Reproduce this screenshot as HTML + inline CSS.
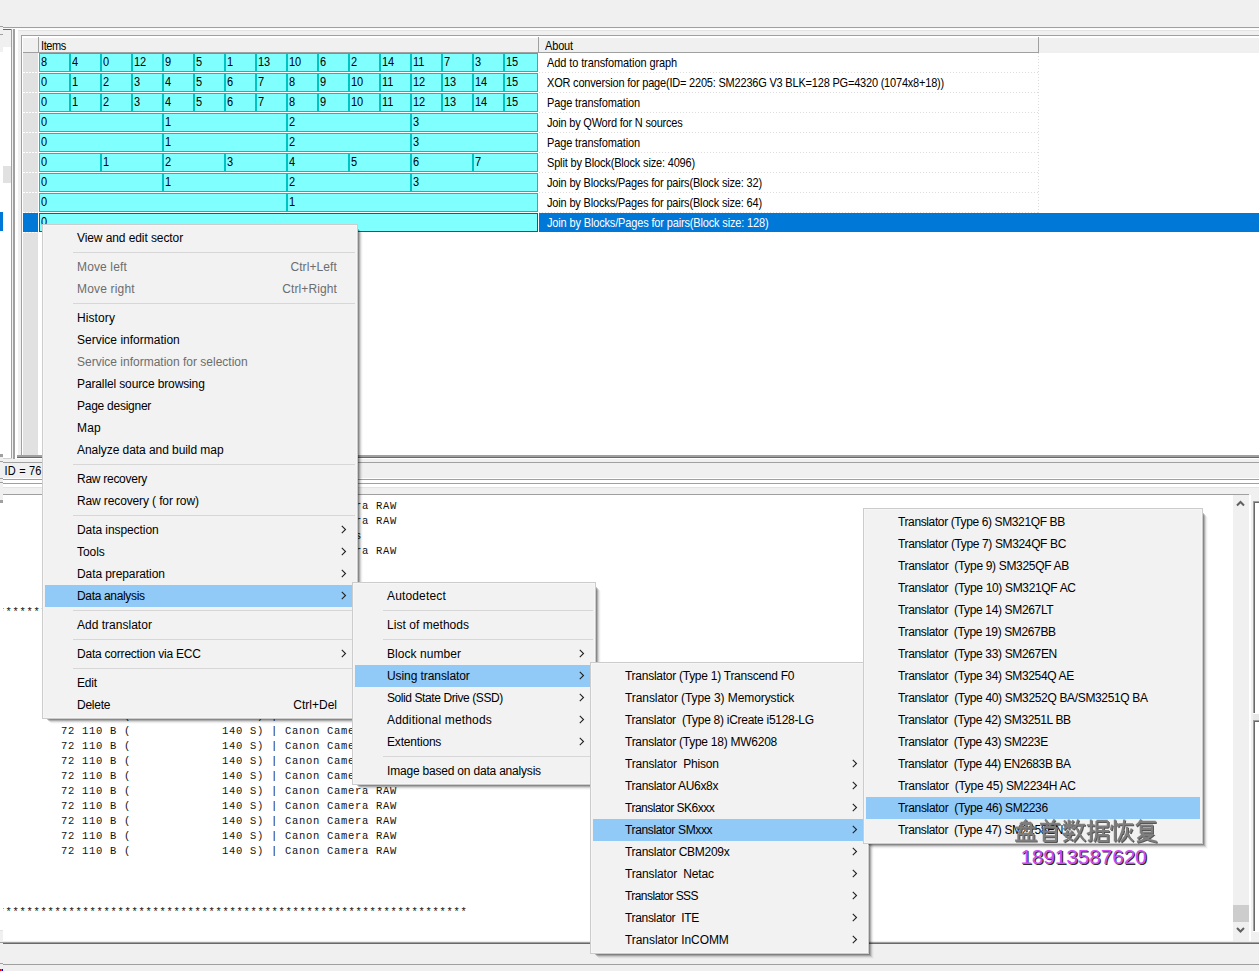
<!DOCTYPE html>
<html><head><meta charset="utf-8"><title>UI</title><style>
html,body{margin:0;padding:0}
body{width:1259px;height:971px;overflow:hidden;position:relative;background:#f0f0f0;font-family:"Liberation Sans",sans-serif}
#r{position:absolute;left:0;top:0;width:1259px;height:971px;overflow:hidden}
#r>div,#r>span,#r>svg{position:absolute;display:block}
.t{white-space:pre;line-height:14px}
.m{position:absolute;display:block;white-space:pre;font-family:"Liberation Mono",monospace;font-size:10.5px;line-height:16px;color:#111;letter-spacing:0.7px}
.menu{background:#f2f2f2;box-sizing:border-box;border:1px solid #cccccc;
 box-shadow:inset 0 0 0 1px #f6f6f6,3px 3px 0 -2px rgba(0,0,0,.214),4px 4px 0 -2px rgba(0,0,0,.176),5px 5px 0 -2px rgba(0,0,0,.105),6px 6px 0 -2px rgba(0,0,0,.05),7px 7px 0 -2px rgba(0,0,0,.02)}
</style></head><body><div id="r">
<div style="left:0px;top:0px;width:1259px;height:971px;background:#f0f0f0;"></div>
<div style="left:3px;top:27px;width:1256px;height:1px;background:#a0a0a0;"></div>
<div style="left:3px;top:28px;width:1256px;height:1px;background:#fafafa;"></div>
<div style="left:0px;top:26px;width:3px;height:1px;background:#a0a0a0;"></div>
<div style="left:0px;top:34px;width:3px;height:1px;background:#a0a0a0;"></div>
<div style="left:3px;top:29px;width:9px;height:1px;background:#696969;"></div>
<div style="left:11px;top:29px;width:1px;height:430px;background:#a0a0a0;"></div>
<div style="left:3px;top:47px;width:8px;height:411px;background:#ffffff;"></div>
<div style="left:0px;top:52px;width:3px;height:402px;background:#ffffff;"></div>
<div style="left:3px;top:458px;width:9px;height:1px;background:#d0d0d0;"></div>
<div style="left:0px;top:454px;width:3px;height:3px;background:#a0a0a0;"></div>
<div style="left:3px;top:166px;width:8px;height:17px;background:#e1e1e1;"></div>
<div style="left:0px;top:212px;width:3px;height:19px;background:#0078d7;"></div>
<div style="left:13px;top:29px;width:2px;height:431px;background:#a0a0a0;"></div>
<div style="left:15px;top:29px;width:2px;height:431px;background:#ffffff;"></div>
<div style="left:17px;top:29px;width:1px;height:426px;background:#ffffff;"></div>
<div style="left:18px;top:29px;width:1241px;height:1px;background:#ffffff;"></div>
<div style="left:18px;top:30px;width:1241px;height:1px;background:#e3e3e3;"></div>
<div style="left:18px;top:31px;width:1241px;height:4px;background:#f0f0f0;"></div>
<div style="left:21px;top:35px;width:1238px;height:1px;background:#a0a0a0;"></div>
<div style="left:21px;top:35px;width:1px;height:421px;background:#a0a0a0;"></div>
<div style="left:22px;top:36px;width:1237px;height:419px;background:#ffffff;"></div>
<div style="left:23px;top:38px;width:1236px;height:14px;background:#f0f0f0;"></div>
<div style="left:23px;top:52px;width:1016px;height:1px;background:#a0a0a0;"></div>
<div style="left:38px;top:37px;width:1px;height:16px;background:#a0a0a0;"></div>
<div style="left:538px;top:37px;width:1px;height:16px;background:#a0a0a0;"></div>
<div style="left:1038px;top:37px;width:1px;height:16px;background:#a0a0a0;"></div>
<div style="left:1039px;top:52px;width:220px;height:1px;background:#f0f0f0;"></div>
<span class="t" style="left:41px;top:39px;font-size:11px;font-weight:400;font-family:'Liberation Sans', sans-serif;color:#000;letter-spacing:-0.381px;transform:scaleY(1.10);transform-origin:0 10.8px">Items</span>
<span class="t" style="left:545px;top:39px;font-size:11px;font-weight:400;font-family:'Liberation Sans', sans-serif;color:#000;letter-spacing:-0.15px;transform:scaleY(1.10);transform-origin:0 10.8px">About</span>
<div style="left:23px;top:53px;width:15px;height:402px;background:#e1e1e1;"></div>
<div style="left:1038px;top:53px;width:1px;height:180px;background:repeating-linear-gradient(to bottom,#dcdcdc 0 1px,#fff 1px 3px)"></div>
<div style="left:538px;top:53px;width:1px;height:180px;background:#fff"></div>
<div style="left:39px;top:53px;width:31px;height:19px;background:#80ffff;border:1px solid #00c4c4;box-sizing:border-box"></div>
<span class="t" style="left:41px;top:55px;font-size:11px;font-weight:400;font-family:'Liberation Sans', sans-serif;color:#000;letter-spacing:0px;transform:scaleY(1.10);transform-origin:0 10.8px">8</span>
<div style="left:70px;top:53px;width:31px;height:19px;background:#80ffff;border:1px solid #00c4c4;box-sizing:border-box"></div>
<span class="t" style="left:72px;top:55px;font-size:11px;font-weight:400;font-family:'Liberation Sans', sans-serif;color:#000;letter-spacing:0px;transform:scaleY(1.10);transform-origin:0 10.8px">4</span>
<div style="left:101px;top:53px;width:31px;height:19px;background:#80ffff;border:1px solid #00c4c4;box-sizing:border-box"></div>
<span class="t" style="left:103px;top:55px;font-size:11px;font-weight:400;font-family:'Liberation Sans', sans-serif;color:#000;letter-spacing:0px;transform:scaleY(1.10);transform-origin:0 10.8px">0</span>
<div style="left:132px;top:53px;width:31px;height:19px;background:#80ffff;border:1px solid #00c4c4;box-sizing:border-box"></div>
<span class="t" style="left:134px;top:55px;font-size:11px;font-weight:400;font-family:'Liberation Sans', sans-serif;color:#000;letter-spacing:0px;transform:scaleY(1.10);transform-origin:0 10.8px">12</span>
<div style="left:163px;top:53px;width:31px;height:19px;background:#80ffff;border:1px solid #00c4c4;box-sizing:border-box"></div>
<span class="t" style="left:165px;top:55px;font-size:11px;font-weight:400;font-family:'Liberation Sans', sans-serif;color:#000;letter-spacing:0px;transform:scaleY(1.10);transform-origin:0 10.8px">9</span>
<div style="left:194px;top:53px;width:31px;height:19px;background:#80ffff;border:1px solid #00c4c4;box-sizing:border-box"></div>
<span class="t" style="left:196px;top:55px;font-size:11px;font-weight:400;font-family:'Liberation Sans', sans-serif;color:#000;letter-spacing:0px;transform:scaleY(1.10);transform-origin:0 10.8px">5</span>
<div style="left:225px;top:53px;width:31px;height:19px;background:#80ffff;border:1px solid #00c4c4;box-sizing:border-box"></div>
<span class="t" style="left:227px;top:55px;font-size:11px;font-weight:400;font-family:'Liberation Sans', sans-serif;color:#000;letter-spacing:0px;transform:scaleY(1.10);transform-origin:0 10.8px">1</span>
<div style="left:256px;top:53px;width:31px;height:19px;background:#80ffff;border:1px solid #00c4c4;box-sizing:border-box"></div>
<span class="t" style="left:258px;top:55px;font-size:11px;font-weight:400;font-family:'Liberation Sans', sans-serif;color:#000;letter-spacing:0px;transform:scaleY(1.10);transform-origin:0 10.8px">13</span>
<div style="left:287px;top:53px;width:31px;height:19px;background:#80ffff;border:1px solid #00c4c4;box-sizing:border-box"></div>
<span class="t" style="left:289px;top:55px;font-size:11px;font-weight:400;font-family:'Liberation Sans', sans-serif;color:#000;letter-spacing:0px;transform:scaleY(1.10);transform-origin:0 10.8px">10</span>
<div style="left:318px;top:53px;width:31px;height:19px;background:#80ffff;border:1px solid #00c4c4;box-sizing:border-box"></div>
<span class="t" style="left:320px;top:55px;font-size:11px;font-weight:400;font-family:'Liberation Sans', sans-serif;color:#000;letter-spacing:0px;transform:scaleY(1.10);transform-origin:0 10.8px">6</span>
<div style="left:349px;top:53px;width:31px;height:19px;background:#80ffff;border:1px solid #00c4c4;box-sizing:border-box"></div>
<span class="t" style="left:351px;top:55px;font-size:11px;font-weight:400;font-family:'Liberation Sans', sans-serif;color:#000;letter-spacing:0px;transform:scaleY(1.10);transform-origin:0 10.8px">2</span>
<div style="left:380px;top:53px;width:31px;height:19px;background:#80ffff;border:1px solid #00c4c4;box-sizing:border-box"></div>
<span class="t" style="left:382px;top:55px;font-size:11px;font-weight:400;font-family:'Liberation Sans', sans-serif;color:#000;letter-spacing:0px;transform:scaleY(1.10);transform-origin:0 10.8px">14</span>
<div style="left:411px;top:53px;width:31px;height:19px;background:#80ffff;border:1px solid #00c4c4;box-sizing:border-box"></div>
<span class="t" style="left:413px;top:55px;font-size:11px;font-weight:400;font-family:'Liberation Sans', sans-serif;color:#000;letter-spacing:0px;transform:scaleY(1.10);transform-origin:0 10.8px">11</span>
<div style="left:442px;top:53px;width:31px;height:19px;background:#80ffff;border:1px solid #00c4c4;box-sizing:border-box"></div>
<span class="t" style="left:444px;top:55px;font-size:11px;font-weight:400;font-family:'Liberation Sans', sans-serif;color:#000;letter-spacing:0px;transform:scaleY(1.10);transform-origin:0 10.8px">7</span>
<div style="left:473px;top:53px;width:31px;height:19px;background:#80ffff;border:1px solid #00c4c4;box-sizing:border-box"></div>
<span class="t" style="left:475px;top:55px;font-size:11px;font-weight:400;font-family:'Liberation Sans', sans-serif;color:#000;letter-spacing:0px;transform:scaleY(1.10);transform-origin:0 10.8px">3</span>
<div style="left:504px;top:53px;width:34px;height:19px;background:#80ffff;border:1px solid #00c4c4;box-sizing:border-box"></div>
<span class="t" style="left:506px;top:55px;font-size:11px;font-weight:400;font-family:'Liberation Sans', sans-serif;color:#000;letter-spacing:0px;transform:scaleY(1.10);transform-origin:0 10.8px">15</span>
<span class="t" style="left:547px;top:56px;font-size:11px;font-weight:400;font-family:'Liberation Sans', sans-serif;color:#000;letter-spacing:-0.104px;transform:scaleY(1.10);transform-origin:0 10.8px">Add to transfomation graph</span>
<div style="left:23px;top:72px;width:15px;height:1px;background:repeating-linear-gradient(to right,#fff 0 2px,#e1e1e1 2px 3px)"></div>
<div style="left:539px;top:72px;width:499px;height:1px;background:repeating-linear-gradient(to right,#dcdcdc 0 1px,#fff 1px 3px)"></div>
<div style="left:39px;top:73px;width:31px;height:19px;background:#80ffff;border:1px solid #00c4c4;box-sizing:border-box"></div>
<span class="t" style="left:41px;top:75px;font-size:11px;font-weight:400;font-family:'Liberation Sans', sans-serif;color:#000;letter-spacing:0px;transform:scaleY(1.10);transform-origin:0 10.8px">0</span>
<div style="left:70px;top:73px;width:31px;height:19px;background:#80ffff;border:1px solid #00c4c4;box-sizing:border-box"></div>
<span class="t" style="left:72px;top:75px;font-size:11px;font-weight:400;font-family:'Liberation Sans', sans-serif;color:#000;letter-spacing:0px;transform:scaleY(1.10);transform-origin:0 10.8px">1</span>
<div style="left:101px;top:73px;width:31px;height:19px;background:#80ffff;border:1px solid #00c4c4;box-sizing:border-box"></div>
<span class="t" style="left:103px;top:75px;font-size:11px;font-weight:400;font-family:'Liberation Sans', sans-serif;color:#000;letter-spacing:0px;transform:scaleY(1.10);transform-origin:0 10.8px">2</span>
<div style="left:132px;top:73px;width:31px;height:19px;background:#80ffff;border:1px solid #00c4c4;box-sizing:border-box"></div>
<span class="t" style="left:134px;top:75px;font-size:11px;font-weight:400;font-family:'Liberation Sans', sans-serif;color:#000;letter-spacing:0px;transform:scaleY(1.10);transform-origin:0 10.8px">3</span>
<div style="left:163px;top:73px;width:31px;height:19px;background:#80ffff;border:1px solid #00c4c4;box-sizing:border-box"></div>
<span class="t" style="left:165px;top:75px;font-size:11px;font-weight:400;font-family:'Liberation Sans', sans-serif;color:#000;letter-spacing:0px;transform:scaleY(1.10);transform-origin:0 10.8px">4</span>
<div style="left:194px;top:73px;width:31px;height:19px;background:#80ffff;border:1px solid #00c4c4;box-sizing:border-box"></div>
<span class="t" style="left:196px;top:75px;font-size:11px;font-weight:400;font-family:'Liberation Sans', sans-serif;color:#000;letter-spacing:0px;transform:scaleY(1.10);transform-origin:0 10.8px">5</span>
<div style="left:225px;top:73px;width:31px;height:19px;background:#80ffff;border:1px solid #00c4c4;box-sizing:border-box"></div>
<span class="t" style="left:227px;top:75px;font-size:11px;font-weight:400;font-family:'Liberation Sans', sans-serif;color:#000;letter-spacing:0px;transform:scaleY(1.10);transform-origin:0 10.8px">6</span>
<div style="left:256px;top:73px;width:31px;height:19px;background:#80ffff;border:1px solid #00c4c4;box-sizing:border-box"></div>
<span class="t" style="left:258px;top:75px;font-size:11px;font-weight:400;font-family:'Liberation Sans', sans-serif;color:#000;letter-spacing:0px;transform:scaleY(1.10);transform-origin:0 10.8px">7</span>
<div style="left:287px;top:73px;width:31px;height:19px;background:#80ffff;border:1px solid #00c4c4;box-sizing:border-box"></div>
<span class="t" style="left:289px;top:75px;font-size:11px;font-weight:400;font-family:'Liberation Sans', sans-serif;color:#000;letter-spacing:0px;transform:scaleY(1.10);transform-origin:0 10.8px">8</span>
<div style="left:318px;top:73px;width:31px;height:19px;background:#80ffff;border:1px solid #00c4c4;box-sizing:border-box"></div>
<span class="t" style="left:320px;top:75px;font-size:11px;font-weight:400;font-family:'Liberation Sans', sans-serif;color:#000;letter-spacing:0px;transform:scaleY(1.10);transform-origin:0 10.8px">9</span>
<div style="left:349px;top:73px;width:31px;height:19px;background:#80ffff;border:1px solid #00c4c4;box-sizing:border-box"></div>
<span class="t" style="left:351px;top:75px;font-size:11px;font-weight:400;font-family:'Liberation Sans', sans-serif;color:#000;letter-spacing:0px;transform:scaleY(1.10);transform-origin:0 10.8px">10</span>
<div style="left:380px;top:73px;width:31px;height:19px;background:#80ffff;border:1px solid #00c4c4;box-sizing:border-box"></div>
<span class="t" style="left:382px;top:75px;font-size:11px;font-weight:400;font-family:'Liberation Sans', sans-serif;color:#000;letter-spacing:0px;transform:scaleY(1.10);transform-origin:0 10.8px">11</span>
<div style="left:411px;top:73px;width:31px;height:19px;background:#80ffff;border:1px solid #00c4c4;box-sizing:border-box"></div>
<span class="t" style="left:413px;top:75px;font-size:11px;font-weight:400;font-family:'Liberation Sans', sans-serif;color:#000;letter-spacing:0px;transform:scaleY(1.10);transform-origin:0 10.8px">12</span>
<div style="left:442px;top:73px;width:31px;height:19px;background:#80ffff;border:1px solid #00c4c4;box-sizing:border-box"></div>
<span class="t" style="left:444px;top:75px;font-size:11px;font-weight:400;font-family:'Liberation Sans', sans-serif;color:#000;letter-spacing:0px;transform:scaleY(1.10);transform-origin:0 10.8px">13</span>
<div style="left:473px;top:73px;width:31px;height:19px;background:#80ffff;border:1px solid #00c4c4;box-sizing:border-box"></div>
<span class="t" style="left:475px;top:75px;font-size:11px;font-weight:400;font-family:'Liberation Sans', sans-serif;color:#000;letter-spacing:0px;transform:scaleY(1.10);transform-origin:0 10.8px">14</span>
<div style="left:504px;top:73px;width:34px;height:19px;background:#80ffff;border:1px solid #00c4c4;box-sizing:border-box"></div>
<span class="t" style="left:506px;top:75px;font-size:11px;font-weight:400;font-family:'Liberation Sans', sans-serif;color:#000;letter-spacing:0px;transform:scaleY(1.10);transform-origin:0 10.8px">15</span>
<span class="t" style="left:547px;top:76px;font-size:11px;font-weight:400;font-family:'Liberation Sans', sans-serif;color:#000;letter-spacing:-0.199px;transform:scaleY(1.10);transform-origin:0 10.8px">XOR conversion for page(ID= 2205: SM2236G V3 BLK=128 PG=4320 (1074x8+18))</span>
<div style="left:23px;top:92px;width:15px;height:1px;background:repeating-linear-gradient(to right,#fff 0 2px,#e1e1e1 2px 3px)"></div>
<div style="left:539px;top:92px;width:499px;height:1px;background:repeating-linear-gradient(to right,#dcdcdc 0 1px,#fff 1px 3px)"></div>
<div style="left:39px;top:93px;width:31px;height:19px;background:#80ffff;border:1px solid #00c4c4;box-sizing:border-box"></div>
<span class="t" style="left:41px;top:95px;font-size:11px;font-weight:400;font-family:'Liberation Sans', sans-serif;color:#000;letter-spacing:0px;transform:scaleY(1.10);transform-origin:0 10.8px">0</span>
<div style="left:70px;top:93px;width:31px;height:19px;background:#80ffff;border:1px solid #00c4c4;box-sizing:border-box"></div>
<span class="t" style="left:72px;top:95px;font-size:11px;font-weight:400;font-family:'Liberation Sans', sans-serif;color:#000;letter-spacing:0px;transform:scaleY(1.10);transform-origin:0 10.8px">1</span>
<div style="left:101px;top:93px;width:31px;height:19px;background:#80ffff;border:1px solid #00c4c4;box-sizing:border-box"></div>
<span class="t" style="left:103px;top:95px;font-size:11px;font-weight:400;font-family:'Liberation Sans', sans-serif;color:#000;letter-spacing:0px;transform:scaleY(1.10);transform-origin:0 10.8px">2</span>
<div style="left:132px;top:93px;width:31px;height:19px;background:#80ffff;border:1px solid #00c4c4;box-sizing:border-box"></div>
<span class="t" style="left:134px;top:95px;font-size:11px;font-weight:400;font-family:'Liberation Sans', sans-serif;color:#000;letter-spacing:0px;transform:scaleY(1.10);transform-origin:0 10.8px">3</span>
<div style="left:163px;top:93px;width:31px;height:19px;background:#80ffff;border:1px solid #00c4c4;box-sizing:border-box"></div>
<span class="t" style="left:165px;top:95px;font-size:11px;font-weight:400;font-family:'Liberation Sans', sans-serif;color:#000;letter-spacing:0px;transform:scaleY(1.10);transform-origin:0 10.8px">4</span>
<div style="left:194px;top:93px;width:31px;height:19px;background:#80ffff;border:1px solid #00c4c4;box-sizing:border-box"></div>
<span class="t" style="left:196px;top:95px;font-size:11px;font-weight:400;font-family:'Liberation Sans', sans-serif;color:#000;letter-spacing:0px;transform:scaleY(1.10);transform-origin:0 10.8px">5</span>
<div style="left:225px;top:93px;width:31px;height:19px;background:#80ffff;border:1px solid #00c4c4;box-sizing:border-box"></div>
<span class="t" style="left:227px;top:95px;font-size:11px;font-weight:400;font-family:'Liberation Sans', sans-serif;color:#000;letter-spacing:0px;transform:scaleY(1.10);transform-origin:0 10.8px">6</span>
<div style="left:256px;top:93px;width:31px;height:19px;background:#80ffff;border:1px solid #00c4c4;box-sizing:border-box"></div>
<span class="t" style="left:258px;top:95px;font-size:11px;font-weight:400;font-family:'Liberation Sans', sans-serif;color:#000;letter-spacing:0px;transform:scaleY(1.10);transform-origin:0 10.8px">7</span>
<div style="left:287px;top:93px;width:31px;height:19px;background:#80ffff;border:1px solid #00c4c4;box-sizing:border-box"></div>
<span class="t" style="left:289px;top:95px;font-size:11px;font-weight:400;font-family:'Liberation Sans', sans-serif;color:#000;letter-spacing:0px;transform:scaleY(1.10);transform-origin:0 10.8px">8</span>
<div style="left:318px;top:93px;width:31px;height:19px;background:#80ffff;border:1px solid #00c4c4;box-sizing:border-box"></div>
<span class="t" style="left:320px;top:95px;font-size:11px;font-weight:400;font-family:'Liberation Sans', sans-serif;color:#000;letter-spacing:0px;transform:scaleY(1.10);transform-origin:0 10.8px">9</span>
<div style="left:349px;top:93px;width:31px;height:19px;background:#80ffff;border:1px solid #00c4c4;box-sizing:border-box"></div>
<span class="t" style="left:351px;top:95px;font-size:11px;font-weight:400;font-family:'Liberation Sans', sans-serif;color:#000;letter-spacing:0px;transform:scaleY(1.10);transform-origin:0 10.8px">10</span>
<div style="left:380px;top:93px;width:31px;height:19px;background:#80ffff;border:1px solid #00c4c4;box-sizing:border-box"></div>
<span class="t" style="left:382px;top:95px;font-size:11px;font-weight:400;font-family:'Liberation Sans', sans-serif;color:#000;letter-spacing:0px;transform:scaleY(1.10);transform-origin:0 10.8px">11</span>
<div style="left:411px;top:93px;width:31px;height:19px;background:#80ffff;border:1px solid #00c4c4;box-sizing:border-box"></div>
<span class="t" style="left:413px;top:95px;font-size:11px;font-weight:400;font-family:'Liberation Sans', sans-serif;color:#000;letter-spacing:0px;transform:scaleY(1.10);transform-origin:0 10.8px">12</span>
<div style="left:442px;top:93px;width:31px;height:19px;background:#80ffff;border:1px solid #00c4c4;box-sizing:border-box"></div>
<span class="t" style="left:444px;top:95px;font-size:11px;font-weight:400;font-family:'Liberation Sans', sans-serif;color:#000;letter-spacing:0px;transform:scaleY(1.10);transform-origin:0 10.8px">13</span>
<div style="left:473px;top:93px;width:31px;height:19px;background:#80ffff;border:1px solid #00c4c4;box-sizing:border-box"></div>
<span class="t" style="left:475px;top:95px;font-size:11px;font-weight:400;font-family:'Liberation Sans', sans-serif;color:#000;letter-spacing:0px;transform:scaleY(1.10);transform-origin:0 10.8px">14</span>
<div style="left:504px;top:93px;width:34px;height:19px;background:#80ffff;border:1px solid #00c4c4;box-sizing:border-box"></div>
<span class="t" style="left:506px;top:95px;font-size:11px;font-weight:400;font-family:'Liberation Sans', sans-serif;color:#000;letter-spacing:0px;transform:scaleY(1.10);transform-origin:0 10.8px">15</span>
<span class="t" style="left:547px;top:96px;font-size:11px;font-weight:400;font-family:'Liberation Sans', sans-serif;color:#000;letter-spacing:-0.133px;transform:scaleY(1.10);transform-origin:0 10.8px">Page transfomation</span>
<div style="left:23px;top:112px;width:15px;height:1px;background:repeating-linear-gradient(to right,#fff 0 2px,#e1e1e1 2px 3px)"></div>
<div style="left:539px;top:112px;width:499px;height:1px;background:repeating-linear-gradient(to right,#dcdcdc 0 1px,#fff 1px 3px)"></div>
<div style="left:39px;top:113px;width:124px;height:19px;background:#80ffff;border:1px solid #00c4c4;box-sizing:border-box"></div>
<span class="t" style="left:41px;top:115px;font-size:11px;font-weight:400;font-family:'Liberation Sans', sans-serif;color:#000;letter-spacing:0px;transform:scaleY(1.10);transform-origin:0 10.8px">0</span>
<div style="left:163px;top:113px;width:124px;height:19px;background:#80ffff;border:1px solid #00c4c4;box-sizing:border-box"></div>
<span class="t" style="left:165px;top:115px;font-size:11px;font-weight:400;font-family:'Liberation Sans', sans-serif;color:#000;letter-spacing:0px;transform:scaleY(1.10);transform-origin:0 10.8px">1</span>
<div style="left:287px;top:113px;width:124px;height:19px;background:#80ffff;border:1px solid #00c4c4;box-sizing:border-box"></div>
<span class="t" style="left:289px;top:115px;font-size:11px;font-weight:400;font-family:'Liberation Sans', sans-serif;color:#000;letter-spacing:0px;transform:scaleY(1.10);transform-origin:0 10.8px">2</span>
<div style="left:411px;top:113px;width:127px;height:19px;background:#80ffff;border:1px solid #00c4c4;box-sizing:border-box"></div>
<span class="t" style="left:413px;top:115px;font-size:11px;font-weight:400;font-family:'Liberation Sans', sans-serif;color:#000;letter-spacing:0px;transform:scaleY(1.10);transform-origin:0 10.8px">3</span>
<span class="t" style="left:547px;top:116px;font-size:11px;font-weight:400;font-family:'Liberation Sans', sans-serif;color:#000;letter-spacing:-0.204px;transform:scaleY(1.10);transform-origin:0 10.8px">Join by QWord for N sources</span>
<div style="left:23px;top:132px;width:15px;height:1px;background:repeating-linear-gradient(to right,#fff 0 2px,#e1e1e1 2px 3px)"></div>
<div style="left:539px;top:132px;width:499px;height:1px;background:repeating-linear-gradient(to right,#dcdcdc 0 1px,#fff 1px 3px)"></div>
<div style="left:39px;top:133px;width:124px;height:19px;background:#80ffff;border:1px solid #00c4c4;box-sizing:border-box"></div>
<span class="t" style="left:41px;top:135px;font-size:11px;font-weight:400;font-family:'Liberation Sans', sans-serif;color:#000;letter-spacing:0px;transform:scaleY(1.10);transform-origin:0 10.8px">0</span>
<div style="left:163px;top:133px;width:124px;height:19px;background:#80ffff;border:1px solid #00c4c4;box-sizing:border-box"></div>
<span class="t" style="left:165px;top:135px;font-size:11px;font-weight:400;font-family:'Liberation Sans', sans-serif;color:#000;letter-spacing:0px;transform:scaleY(1.10);transform-origin:0 10.8px">1</span>
<div style="left:287px;top:133px;width:124px;height:19px;background:#80ffff;border:1px solid #00c4c4;box-sizing:border-box"></div>
<span class="t" style="left:289px;top:135px;font-size:11px;font-weight:400;font-family:'Liberation Sans', sans-serif;color:#000;letter-spacing:0px;transform:scaleY(1.10);transform-origin:0 10.8px">2</span>
<div style="left:411px;top:133px;width:127px;height:19px;background:#80ffff;border:1px solid #00c4c4;box-sizing:border-box"></div>
<span class="t" style="left:413px;top:135px;font-size:11px;font-weight:400;font-family:'Liberation Sans', sans-serif;color:#000;letter-spacing:0px;transform:scaleY(1.10);transform-origin:0 10.8px">3</span>
<span class="t" style="left:547px;top:136px;font-size:11px;font-weight:400;font-family:'Liberation Sans', sans-serif;color:#000;letter-spacing:-0.133px;transform:scaleY(1.10);transform-origin:0 10.8px">Page transfomation</span>
<div style="left:23px;top:152px;width:15px;height:1px;background:repeating-linear-gradient(to right,#fff 0 2px,#e1e1e1 2px 3px)"></div>
<div style="left:539px;top:152px;width:499px;height:1px;background:repeating-linear-gradient(to right,#dcdcdc 0 1px,#fff 1px 3px)"></div>
<div style="left:39px;top:153px;width:62px;height:19px;background:#80ffff;border:1px solid #00c4c4;box-sizing:border-box"></div>
<span class="t" style="left:41px;top:155px;font-size:11px;font-weight:400;font-family:'Liberation Sans', sans-serif;color:#000;letter-spacing:0px;transform:scaleY(1.10);transform-origin:0 10.8px">0</span>
<div style="left:101px;top:153px;width:62px;height:19px;background:#80ffff;border:1px solid #00c4c4;box-sizing:border-box"></div>
<span class="t" style="left:103px;top:155px;font-size:11px;font-weight:400;font-family:'Liberation Sans', sans-serif;color:#000;letter-spacing:0px;transform:scaleY(1.10);transform-origin:0 10.8px">1</span>
<div style="left:163px;top:153px;width:62px;height:19px;background:#80ffff;border:1px solid #00c4c4;box-sizing:border-box"></div>
<span class="t" style="left:165px;top:155px;font-size:11px;font-weight:400;font-family:'Liberation Sans', sans-serif;color:#000;letter-spacing:0px;transform:scaleY(1.10);transform-origin:0 10.8px">2</span>
<div style="left:225px;top:153px;width:62px;height:19px;background:#80ffff;border:1px solid #00c4c4;box-sizing:border-box"></div>
<span class="t" style="left:227px;top:155px;font-size:11px;font-weight:400;font-family:'Liberation Sans', sans-serif;color:#000;letter-spacing:0px;transform:scaleY(1.10);transform-origin:0 10.8px">3</span>
<div style="left:287px;top:153px;width:62px;height:19px;background:#80ffff;border:1px solid #00c4c4;box-sizing:border-box"></div>
<span class="t" style="left:289px;top:155px;font-size:11px;font-weight:400;font-family:'Liberation Sans', sans-serif;color:#000;letter-spacing:0px;transform:scaleY(1.10);transform-origin:0 10.8px">4</span>
<div style="left:349px;top:153px;width:62px;height:19px;background:#80ffff;border:1px solid #00c4c4;box-sizing:border-box"></div>
<span class="t" style="left:351px;top:155px;font-size:11px;font-weight:400;font-family:'Liberation Sans', sans-serif;color:#000;letter-spacing:0px;transform:scaleY(1.10);transform-origin:0 10.8px">5</span>
<div style="left:411px;top:153px;width:62px;height:19px;background:#80ffff;border:1px solid #00c4c4;box-sizing:border-box"></div>
<span class="t" style="left:413px;top:155px;font-size:11px;font-weight:400;font-family:'Liberation Sans', sans-serif;color:#000;letter-spacing:0px;transform:scaleY(1.10);transform-origin:0 10.8px">6</span>
<div style="left:473px;top:153px;width:65px;height:19px;background:#80ffff;border:1px solid #00c4c4;box-sizing:border-box"></div>
<span class="t" style="left:475px;top:155px;font-size:11px;font-weight:400;font-family:'Liberation Sans', sans-serif;color:#000;letter-spacing:0px;transform:scaleY(1.10);transform-origin:0 10.8px">7</span>
<span class="t" style="left:547px;top:156px;font-size:11px;font-weight:400;font-family:'Liberation Sans', sans-serif;color:#000;letter-spacing:-0.17px;transform:scaleY(1.10);transform-origin:0 10.8px">Split by Block(Block size: 4096)</span>
<div style="left:23px;top:172px;width:15px;height:1px;background:repeating-linear-gradient(to right,#fff 0 2px,#e1e1e1 2px 3px)"></div>
<div style="left:539px;top:172px;width:499px;height:1px;background:repeating-linear-gradient(to right,#dcdcdc 0 1px,#fff 1px 3px)"></div>
<div style="left:39px;top:173px;width:124px;height:19px;background:#80ffff;border:1px solid #00c4c4;box-sizing:border-box"></div>
<span class="t" style="left:41px;top:175px;font-size:11px;font-weight:400;font-family:'Liberation Sans', sans-serif;color:#000;letter-spacing:0px;transform:scaleY(1.10);transform-origin:0 10.8px">0</span>
<div style="left:163px;top:173px;width:124px;height:19px;background:#80ffff;border:1px solid #00c4c4;box-sizing:border-box"></div>
<span class="t" style="left:165px;top:175px;font-size:11px;font-weight:400;font-family:'Liberation Sans', sans-serif;color:#000;letter-spacing:0px;transform:scaleY(1.10);transform-origin:0 10.8px">1</span>
<div style="left:287px;top:173px;width:124px;height:19px;background:#80ffff;border:1px solid #00c4c4;box-sizing:border-box"></div>
<span class="t" style="left:289px;top:175px;font-size:11px;font-weight:400;font-family:'Liberation Sans', sans-serif;color:#000;letter-spacing:0px;transform:scaleY(1.10);transform-origin:0 10.8px">2</span>
<div style="left:411px;top:173px;width:127px;height:19px;background:#80ffff;border:1px solid #00c4c4;box-sizing:border-box"></div>
<span class="t" style="left:413px;top:175px;font-size:11px;font-weight:400;font-family:'Liberation Sans', sans-serif;color:#000;letter-spacing:0px;transform:scaleY(1.10);transform-origin:0 10.8px">3</span>
<span class="t" style="left:547px;top:176px;font-size:11px;font-weight:400;font-family:'Liberation Sans', sans-serif;color:#000;letter-spacing:-0.164px;transform:scaleY(1.10);transform-origin:0 10.8px">Join by Blocks/Pages for pairs(Block size: 32)</span>
<div style="left:23px;top:192px;width:15px;height:1px;background:repeating-linear-gradient(to right,#fff 0 2px,#e1e1e1 2px 3px)"></div>
<div style="left:539px;top:192px;width:499px;height:1px;background:repeating-linear-gradient(to right,#dcdcdc 0 1px,#fff 1px 3px)"></div>
<div style="left:39px;top:193px;width:248px;height:19px;background:#80ffff;border:1px solid #00c4c4;box-sizing:border-box"></div>
<span class="t" style="left:41px;top:195px;font-size:11px;font-weight:400;font-family:'Liberation Sans', sans-serif;color:#000;letter-spacing:0px;transform:scaleY(1.10);transform-origin:0 10.8px">0</span>
<div style="left:287px;top:193px;width:251px;height:19px;background:#80ffff;border:1px solid #00c4c4;box-sizing:border-box"></div>
<span class="t" style="left:289px;top:195px;font-size:11px;font-weight:400;font-family:'Liberation Sans', sans-serif;color:#000;letter-spacing:0px;transform:scaleY(1.10);transform-origin:0 10.8px">1</span>
<span class="t" style="left:547px;top:196px;font-size:11px;font-weight:400;font-family:'Liberation Sans', sans-serif;color:#000;letter-spacing:-0.164px;transform:scaleY(1.10);transform-origin:0 10.8px">Join by Blocks/Pages for pairs(Block size: 64)</span>
<div style="left:23px;top:212px;width:15px;height:1px;background:repeating-linear-gradient(to right,#fff 0 2px,#e1e1e1 2px 3px)"></div>
<div style="left:539px;top:212px;width:499px;height:1px;background:repeating-linear-gradient(to right,#dcdcdc 0 1px,#fff 1px 3px)"></div>
<div style="left:23px;top:213px;width:1236px;height:19px;background:#0078d7;"></div>
<div style="left:38px;top:213px;width:1px;height:19px;background:#ffffff;"></div>
<div style="left:538px;top:213px;width:1px;height:19px;background:#ffffff;"></div>
<div style="left:39px;top:213px;width:499px;height:19px;background:#80ffff;border:1px solid #ff0000;box-sizing:border-box"></div>
<span class="t" style="left:41px;top:215px;font-size:11px;font-weight:400;font-family:'Liberation Sans', sans-serif;color:#000;letter-spacing:0px;transform:scaleY(1.10);transform-origin:0 10.8px">0</span>
<span class="t" style="left:547px;top:216px;font-size:11px;font-weight:400;font-family:'Liberation Sans', sans-serif;color:#fff;letter-spacing:-0.152px;transform:scaleY(1.10);transform-origin:0 10.8px">Join by Blocks/Pages for pairs(Block size: 128)</span>
<div style="left:23px;top:232px;width:15px;height:1px;background:repeating-linear-gradient(to right,#fff 0 2px,#e1e1e1 2px 3px)"></div>
<div style="left:17px;top:455px;width:1242px;height:2px;background:#a0a0a0;"></div>
<div style="left:17px;top:457px;width:1242px;height:1px;background:#696969;"></div>
<div style="left:15px;top:458px;width:1244px;height:1px;background:#ffffff;"></div>
<div style="left:0px;top:459px;width:1259px;height:36px;background:#f0f0f0;"></div>
<div style="left:3px;top:462px;width:1256px;height:1px;background:#a0a0a0;"></div>
<div style="left:0px;top:461px;width:3px;height:1px;background:#a0a0a0;"></div>
<div style="left:3px;top:478px;width:1256px;height:1px;background:#ffffff;"></div>
<div style="left:3px;top:479px;width:1256px;height:1px;background:#a0a0a0;"></div>
<div style="left:3px;top:480px;width:1256px;height:3px;background:#ffffff;"></div>
<div style="left:3px;top:483px;width:1256px;height:1px;background:#a0a0a0;"></div>
<div style="left:3px;top:484px;width:1256px;height:3px;background:#ffffff;"></div>
<div style="left:3px;top:487px;width:1256px;height:1px;background:#e3e3e3;"></div>
<div style="left:0px;top:478px;width:3px;height:1px;background:#a0a0a0;"></div>
<div style="left:0px;top:482px;width:3px;height:1px;background:#a0a0a0;"></div>
<span class="t" style="left:4.6px;top:463.6px;font-size:11px;font-weight:400;font-family:'Liberation Sans', sans-serif;color:#000;letter-spacing:0.174px;transform:scaleY(1.10);transform-origin:0 10.8px">ID = 76</span>
<div style="left:3px;top:494px;width:1246px;height:1px;background:#a0a0a0;"></div>
<div style="left:3px;top:495px;width:1230px;height:446px;background:#ffffff;"></div>
<div style="left:0px;top:500px;width:3px;height:3px;background:#a0a0a0;"></div>
<div style="left:0px;top:503px;width:3px;height:427px;background:#ffffff;"></div>
<div style="left:1233px;top:495px;width:16px;height:446px;background:#f0f0f0;"></div>
<div style="left:1249px;top:495px;width:2px;height:446px;background:#ffffff;"></div>
<div style="left:1233px;top:905px;width:16px;height:17px;background:#cdcdcd;"></div>
<svg style="left:1236px;top:500px" width="9" height="8" viewBox="0 0 9 8"><path d="M1 5.5 L4.5 2 L8 5.5" fill="none" stroke="#606060" stroke-width="2"/></svg>
<svg style="left:1236px;top:926px" width="9" height="8" viewBox="0 0 9 8"><path d="M1 2 L4.5 5.5 L8 2" fill="none" stroke="#606060" stroke-width="2"/></svg>
<div style="left:1253px;top:501px;width:6px;height:1px;background:#a0a0a0;"></div>
<div style="left:1254px;top:502px;width:5px;height:1px;background:#696969;"></div>
<div style="left:1253px;top:501px;width:1px;height:212px;background:#a0a0a0;"></div>
<div style="left:1254px;top:502px;width:1px;height:211px;background:#696969;"></div>
<div style="left:1255px;top:503px;width:4px;height:210px;background:#ffffff;"></div>
<div style="left:1253px;top:713px;width:6px;height:1px;background:#ffffff;"></div>
<div style="left:1253px;top:714px;width:6px;height:6px;background:#e8e8e8;"></div>
<div style="left:1253px;top:720px;width:6px;height:1px;background:#a0a0a0;"></div>
<div style="left:1254px;top:721px;width:5px;height:1px;background:#696969;"></div>
<div style="left:1253px;top:720px;width:1px;height:211px;background:#a0a0a0;"></div>
<div style="left:1254px;top:721px;width:1px;height:210px;background:#696969;"></div>
<div style="left:1255px;top:722px;width:4px;height:209px;background:#ffffff;"></div>
<div style="left:1253px;top:931px;width:6px;height:1px;background:#ffffff;"></div>
<div style="left:3px;top:495px;width:1230px;height:446px;overflow:hidden"><span class="m" style="left:58px;top:3px">72 110 B (             140 S) | Canon Camera RAW</span><span class="m" style="left:58px;top:18px">72 110 B (             140 S) | Canon Camera RAW</span><span class="m" style="left:58px;top:33px">                                          s</span><span class="m" style="left:58px;top:48px">72 110 B (             140 S) | Canon Camera RAW</span><span class="m" style="left:58px;top:213px">72 110 B (             140 S) | Canon Camera RAW</span><span class="m" style="left:58px;top:228px">72 110 B (             140 S) | Canon Camera RAW</span><span class="m" style="left:58px;top:243px">72 110 B (             140 S) | Canon Camera RAW</span><span class="m" style="left:58px;top:258px">72 110 B (             140 S) | Canon Camera RAW</span><span class="m" style="left:58px;top:273px">72 110 B (             140 S) | Canon Camera RAW</span><span class="m" style="left:58px;top:288px">72 110 B (             140 S) | Canon Camera RAW</span><span class="m" style="left:58px;top:303px">72 110 B (             140 S) | Canon Camera RAW</span><span class="m" style="left:58px;top:318px">72 110 B (             140 S) | Canon Camera RAW</span><span class="m" style="left:58px;top:333px">72 110 B (             140 S) | Canon Camera RAW</span><span class="m" style="left:58px;top:348px">72 110 B (             140 S) | Canon Camera RAW</span><span class="m" style="left:-4.5px;top:109px">*******************************************************************</span><span class="m" style="left:-4.5px;top:409px">*******************************************************************</span></div>
<div style="left:3px;top:941px;width:1256px;height:1px;background:#ececec;"></div>
<div style="left:3px;top:942px;width:1256px;height:1px;background:#a0a0a0;"></div>
<div style="left:3px;top:943px;width:1256px;height:1px;background:#696969;"></div>
<div style="left:0px;top:942px;width:3px;height:1px;background:#a0a0a0;"></div>
<div style="left:0px;top:930px;width:3px;height:1px;background:#e3e3e3;"></div>
<div style="left:0px;top:931px;width:3px;height:10px;background:#f0f0f0;"></div>
<div style="left:0px;top:944px;width:1259px;height:27px;background:#f0f0f0;"></div>
<div style="left:3px;top:964px;width:1256px;height:1px;background:#a0a0a0;"></div>
<div style="left:0px;top:963px;width:3px;height:1px;background:#a0a0a0;"></div>
<div style="left:0px;top:969px;width:1px;height:2px;background:#ff0000;"></div>
<div style="left:1px;top:969px;width:1px;height:2px;background:#00c000;"></div>
<div style="left:2px;top:969px;width:1px;height:2px;background:#0000ff;"></div>
<div class="menu" style="left:42px;top:224px;width:316px;height:495px"></div>
<span class="t" style="left:77px;top:231px;font-size:12px;font-weight:400;font-family:'Liberation Sans', sans-serif;color:#000;letter-spacing:-0.087px;">View and edit sector</span>
<div style="left:73px;top:252px;width:282px;height:1px;background:#d7d7d7;"></div>
<span class="t" style="left:77px;top:260px;font-size:12px;font-weight:400;font-family:'Liberation Sans', sans-serif;color:#6d6d6d;letter-spacing:0.135px;">Move left</span>
<span class="t" style="left:290.4px;top:260px;font-size:12px;font-weight:400;font-family:'Liberation Sans', sans-serif;color:#6d6d6d;letter-spacing:0.101px;">Ctrl+Left</span>
<span class="t" style="left:77px;top:282px;font-size:12px;font-weight:400;font-family:'Liberation Sans', sans-serif;color:#6d6d6d;letter-spacing:0.177px;">Move right</span>
<span class="t" style="left:282.2px;top:282px;font-size:12px;font-weight:400;font-family:'Liberation Sans', sans-serif;color:#6d6d6d;letter-spacing:0.111px;">Ctrl+Right</span>
<div style="left:73px;top:303px;width:282px;height:1px;background:#d7d7d7;"></div>
<span class="t" style="left:77px;top:311px;font-size:12px;font-weight:400;font-family:'Liberation Sans', sans-serif;color:#000;letter-spacing:0.094px;">History</span>
<span class="t" style="left:77px;top:333px;font-size:12px;font-weight:400;font-family:'Liberation Sans', sans-serif;color:#000;letter-spacing:0.004px;">Service information</span>
<span class="t" style="left:77px;top:355px;font-size:12px;font-weight:400;font-family:'Liberation Sans', sans-serif;color:#6d6d6d;letter-spacing:-0.002px;">Service information for selection</span>
<span class="t" style="left:77px;top:377px;font-size:12px;font-weight:400;font-family:'Liberation Sans', sans-serif;color:#000;letter-spacing:-0.126px;">Parallel source browsing</span>
<span class="t" style="left:77px;top:399px;font-size:12px;font-weight:400;font-family:'Liberation Sans', sans-serif;color:#000;letter-spacing:-0.253px;">Page designer</span>
<span class="t" style="left:77px;top:421px;font-size:12px;font-weight:400;font-family:'Liberation Sans', sans-serif;color:#000;letter-spacing:0.152px;">Map</span>
<span class="t" style="left:77px;top:443px;font-size:12px;font-weight:400;font-family:'Liberation Sans', sans-serif;color:#000;letter-spacing:-0.062px;">Analyze data and build map</span>
<div style="left:73px;top:464px;width:282px;height:1px;background:#d7d7d7;"></div>
<span class="t" style="left:77px;top:472px;font-size:12px;font-weight:400;font-family:'Liberation Sans', sans-serif;color:#000;letter-spacing:-0.272px;">Raw recovery</span>
<span class="t" style="left:77px;top:494px;font-size:12px;font-weight:400;font-family:'Liberation Sans', sans-serif;color:#000;letter-spacing:-0.126px;">Raw recovery ( for row)</span>
<div style="left:73px;top:515px;width:282px;height:1px;background:#d7d7d7;"></div>
<span class="t" style="left:77px;top:523px;font-size:12px;font-weight:400;font-family:'Liberation Sans', sans-serif;color:#000;letter-spacing:-0.075px;">Data inspection</span>
<svg style="left:341px;top:525px" width="6" height="9" viewBox="0 0 6 9"><path d="M0.8 0.8 L4.5 4.5 L0.8 8.2" fill="none" stroke="#222" stroke-width="1.1"/></svg>
<span class="t" style="left:77px;top:545px;font-size:12px;font-weight:400;font-family:'Liberation Sans', sans-serif;color:#000;letter-spacing:-0.043px;">Tools</span>
<svg style="left:341px;top:547px" width="6" height="9" viewBox="0 0 6 9"><path d="M0.8 0.8 L4.5 4.5 L0.8 8.2" fill="none" stroke="#222" stroke-width="1.1"/></svg>
<span class="t" style="left:77px;top:567px;font-size:12px;font-weight:400;font-family:'Liberation Sans', sans-serif;color:#000;letter-spacing:-0.099px;">Data preparation</span>
<svg style="left:341px;top:569px" width="6" height="9" viewBox="0 0 6 9"><path d="M0.8 0.8 L4.5 4.5 L0.8 8.2" fill="none" stroke="#222" stroke-width="1.1"/></svg>
<div style="left:45px;top:585px;width:310px;height:22px;background:#91c9f7;"></div>
<span class="t" style="left:77px;top:589px;font-size:12px;font-weight:400;font-family:'Liberation Sans', sans-serif;color:#000;letter-spacing:-0.334px;">Data analysis</span>
<svg style="left:341px;top:591px" width="6" height="9" viewBox="0 0 6 9"><path d="M0.8 0.8 L4.5 4.5 L0.8 8.2" fill="none" stroke="#222" stroke-width="1.1"/></svg>
<div style="left:73px;top:610px;width:282px;height:1px;background:#d7d7d7;"></div>
<span class="t" style="left:77px;top:618px;font-size:12px;font-weight:400;font-family:'Liberation Sans', sans-serif;color:#000;letter-spacing:0.013px;">Add translator</span>
<div style="left:73px;top:639px;width:282px;height:1px;background:#d7d7d7;"></div>
<span class="t" style="left:77px;top:647px;font-size:12px;font-weight:400;font-family:'Liberation Sans', sans-serif;color:#000;letter-spacing:-0.218px;">Data correction via ECC</span>
<svg style="left:341px;top:649px" width="6" height="9" viewBox="0 0 6 9"><path d="M0.8 0.8 L4.5 4.5 L0.8 8.2" fill="none" stroke="#222" stroke-width="1.1"/></svg>
<div style="left:73px;top:668px;width:282px;height:1px;background:#d7d7d7;"></div>
<span class="t" style="left:77px;top:676px;font-size:12px;font-weight:400;font-family:'Liberation Sans', sans-serif;color:#000;letter-spacing:-0.222px;">Edit</span>
<span class="t" style="left:77px;top:698px;font-size:12px;font-weight:400;font-family:'Liberation Sans', sans-serif;color:#000;letter-spacing:-0.248px;">Delete</span>
<span class="t" style="left:293.3px;top:698px;font-size:12px;font-weight:400;font-family:'Liberation Sans', sans-serif;color:#000;letter-spacing:0.002px;">Ctrl+Del</span>
<div class="menu" style="left:352px;top:582px;width:244px;height:203px"></div>
<span class="t" style="left:387px;top:589px;font-size:12px;font-weight:400;font-family:'Liberation Sans', sans-serif;color:#000;letter-spacing:0.152px;">Autodetect</span>
<div style="left:383px;top:610px;width:210px;height:1px;background:#d7d7d7;"></div>
<span class="t" style="left:387px;top:618px;font-size:12px;font-weight:400;font-family:'Liberation Sans', sans-serif;color:#000;letter-spacing:0.048px;">List of methods</span>
<div style="left:383px;top:639px;width:210px;height:1px;background:#d7d7d7;"></div>
<span class="t" style="left:387px;top:647px;font-size:12px;font-weight:400;font-family:'Liberation Sans', sans-serif;color:#000;letter-spacing:0.06px;">Block number</span>
<svg style="left:579px;top:649px" width="6" height="9" viewBox="0 0 6 9"><path d="M0.8 0.8 L4.5 4.5 L0.8 8.2" fill="none" stroke="#222" stroke-width="1.1"/></svg>
<div style="left:355px;top:665px;width:238px;height:22px;background:#91c9f7;"></div>
<span class="t" style="left:387px;top:669px;font-size:12px;font-weight:400;font-family:'Liberation Sans', sans-serif;color:#000;letter-spacing:-0.078px;">Using translator</span>
<svg style="left:579px;top:671px" width="6" height="9" viewBox="0 0 6 9"><path d="M0.8 0.8 L4.5 4.5 L0.8 8.2" fill="none" stroke="#222" stroke-width="1.1"/></svg>
<span class="t" style="left:387px;top:691px;font-size:12px;font-weight:400;font-family:'Liberation Sans', sans-serif;color:#000;letter-spacing:-0.416px;">Solid State Drive (SSD)</span>
<svg style="left:579px;top:693px" width="6" height="9" viewBox="0 0 6 9"><path d="M0.8 0.8 L4.5 4.5 L0.8 8.2" fill="none" stroke="#222" stroke-width="1.1"/></svg>
<span class="t" style="left:387px;top:713px;font-size:12px;font-weight:400;font-family:'Liberation Sans', sans-serif;color:#000;letter-spacing:0.157px;">Additional methods</span>
<svg style="left:579px;top:715px" width="6" height="9" viewBox="0 0 6 9"><path d="M0.8 0.8 L4.5 4.5 L0.8 8.2" fill="none" stroke="#222" stroke-width="1.1"/></svg>
<span class="t" style="left:387px;top:735px;font-size:12px;font-weight:400;font-family:'Liberation Sans', sans-serif;color:#000;letter-spacing:-0.185px;">Extentions</span>
<svg style="left:579px;top:737px" width="6" height="9" viewBox="0 0 6 9"><path d="M0.8 0.8 L4.5 4.5 L0.8 8.2" fill="none" stroke="#222" stroke-width="1.1"/></svg>
<div style="left:383px;top:756px;width:210px;height:1px;background:#d7d7d7;"></div>
<span class="t" style="left:387px;top:764px;font-size:12px;font-weight:400;font-family:'Liberation Sans', sans-serif;color:#000;letter-spacing:-0.198px;">Image based on data analysis</span>
<div class="menu" style="left:590px;top:662px;width:279px;height:292px"></div>
<span class="t" style="left:625px;top:669px;font-size:12px;font-weight:400;font-family:'Liberation Sans', sans-serif;color:#000;letter-spacing:-0.264px;">Translator (Type 1) Transcend F0</span>
<span class="t" style="left:625px;top:691px;font-size:12px;font-weight:400;font-family:'Liberation Sans', sans-serif;color:#000;letter-spacing:-0.077px;">Translator (Type 3) Memorystick</span>
<span class="t" style="left:625px;top:713px;font-size:12px;font-weight:400;font-family:'Liberation Sans', sans-serif;color:#000;letter-spacing:-0.278px;">Translator  (Type 8) iCreate i5128-LG</span>
<span class="t" style="left:625px;top:735px;font-size:12px;font-weight:400;font-family:'Liberation Sans', sans-serif;color:#000;letter-spacing:-0.258px;">Translator (Type 18) MW6208</span>
<span class="t" style="left:625px;top:757px;font-size:12px;font-weight:400;font-family:'Liberation Sans', sans-serif;color:#000;letter-spacing:-0.174px;">Translator  Phison</span>
<svg style="left:852px;top:759px" width="6" height="9" viewBox="0 0 6 9"><path d="M0.8 0.8 L4.5 4.5 L0.8 8.2" fill="none" stroke="#222" stroke-width="1.1"/></svg>
<span class="t" style="left:625px;top:779px;font-size:12px;font-weight:400;font-family:'Liberation Sans', sans-serif;color:#000;letter-spacing:-0.298px;">Translator AU6x8x</span>
<svg style="left:852px;top:781px" width="6" height="9" viewBox="0 0 6 9"><path d="M0.8 0.8 L4.5 4.5 L0.8 8.2" fill="none" stroke="#222" stroke-width="1.1"/></svg>
<span class="t" style="left:625px;top:801px;font-size:12px;font-weight:400;font-family:'Liberation Sans', sans-serif;color:#000;letter-spacing:-0.494px;">Translator SK6xxx</span>
<svg style="left:852px;top:803px" width="6" height="9" viewBox="0 0 6 9"><path d="M0.8 0.8 L4.5 4.5 L0.8 8.2" fill="none" stroke="#222" stroke-width="1.1"/></svg>
<div style="left:593px;top:819px;width:273px;height:22px;background:#91c9f7;"></div>
<span class="t" style="left:625px;top:823px;font-size:12px;font-weight:400;font-family:'Liberation Sans', sans-serif;color:#000;letter-spacing:-0.357px;">Translator SMxxx</span>
<svg style="left:852px;top:825px" width="6" height="9" viewBox="0 0 6 9"><path d="M0.8 0.8 L4.5 4.5 L0.8 8.2" fill="none" stroke="#222" stroke-width="1.1"/></svg>
<span class="t" style="left:625px;top:845px;font-size:12px;font-weight:400;font-family:'Liberation Sans', sans-serif;color:#000;letter-spacing:-0.289px;">Translator CBM209x</span>
<svg style="left:852px;top:847px" width="6" height="9" viewBox="0 0 6 9"><path d="M0.8 0.8 L4.5 4.5 L0.8 8.2" fill="none" stroke="#222" stroke-width="1.1"/></svg>
<span class="t" style="left:625px;top:867px;font-size:12px;font-weight:400;font-family:'Liberation Sans', sans-serif;color:#000;letter-spacing:-0.158px;">Translator  Netac</span>
<svg style="left:852px;top:869px" width="6" height="9" viewBox="0 0 6 9"><path d="M0.8 0.8 L4.5 4.5 L0.8 8.2" fill="none" stroke="#222" stroke-width="1.1"/></svg>
<span class="t" style="left:625px;top:889px;font-size:12px;font-weight:400;font-family:'Liberation Sans', sans-serif;color:#000;letter-spacing:-0.566px;">Translator SSS</span>
<svg style="left:852px;top:891px" width="6" height="9" viewBox="0 0 6 9"><path d="M0.8 0.8 L4.5 4.5 L0.8 8.2" fill="none" stroke="#222" stroke-width="1.1"/></svg>
<span class="t" style="left:625px;top:911px;font-size:12px;font-weight:400;font-family:'Liberation Sans', sans-serif;color:#000;letter-spacing:-0.328px;">Translator  ITE</span>
<svg style="left:852px;top:913px" width="6" height="9" viewBox="0 0 6 9"><path d="M0.8 0.8 L4.5 4.5 L0.8 8.2" fill="none" stroke="#222" stroke-width="1.1"/></svg>
<span class="t" style="left:625px;top:933px;font-size:12px;font-weight:400;font-family:'Liberation Sans', sans-serif;color:#000;letter-spacing:-0.065px;">Translator InCOMM</span>
<svg style="left:852px;top:935px" width="6" height="9" viewBox="0 0 6 9"><path d="M0.8 0.8 L4.5 4.5 L0.8 8.2" fill="none" stroke="#222" stroke-width="1.1"/></svg>
<div class="menu" style="left:863px;top:508px;width:340px;height:336px"></div>
<span class="t" style="left:898px;top:515px;font-size:12px;font-weight:400;font-family:'Liberation Sans', sans-serif;color:#000;letter-spacing:-0.383px;">Translator (Type 6) SM321QF BB</span>
<span class="t" style="left:898px;top:537px;font-size:12px;font-weight:400;font-family:'Liberation Sans', sans-serif;color:#000;letter-spacing:-0.365px;">Translator (Type 7) SM324QF BC</span>
<span class="t" style="left:898px;top:559px;font-size:12px;font-weight:400;font-family:'Liberation Sans', sans-serif;color:#000;letter-spacing:-0.325px;">Translator  (Type 9) SM325QF AB</span>
<span class="t" style="left:898px;top:581px;font-size:12px;font-weight:400;font-family:'Liberation Sans', sans-serif;color:#000;letter-spacing:-0.331px;">Translator  (Type 10) SM321QF AC</span>
<span class="t" style="left:898px;top:603px;font-size:12px;font-weight:400;font-family:'Liberation Sans', sans-serif;color:#000;letter-spacing:-0.348px;">Translator  (Type 14) SM267LT</span>
<span class="t" style="left:898px;top:625px;font-size:12px;font-weight:400;font-family:'Liberation Sans', sans-serif;color:#000;letter-spacing:-0.365px;">Translator  (Type 19) SM267BB</span>
<span class="t" style="left:898px;top:647px;font-size:12px;font-weight:400;font-family:'Liberation Sans', sans-serif;color:#000;letter-spacing:-0.347px;">Translator  (Type 33) SM267EN</span>
<span class="t" style="left:898px;top:669px;font-size:12px;font-weight:400;font-family:'Liberation Sans', sans-serif;color:#000;letter-spacing:-0.346px;">Translator  (Type 34) SM3254Q AE</span>
<span class="t" style="left:898px;top:691px;font-size:12px;font-weight:400;font-family:'Liberation Sans', sans-serif;color:#000;letter-spacing:-0.341px;">Translator  (Type 40) SM3252Q BA/SM3251Q BA</span>
<span class="t" style="left:898px;top:713px;font-size:12px;font-weight:400;font-family:'Liberation Sans', sans-serif;color:#000;letter-spacing:-0.37px;">Translator  (Type 42) SM3251L BB</span>
<span class="t" style="left:898px;top:735px;font-size:12px;font-weight:400;font-family:'Liberation Sans', sans-serif;color:#000;letter-spacing:-0.375px;">Translator  (Type 43) SM223E</span>
<span class="t" style="left:898px;top:757px;font-size:12px;font-weight:400;font-family:'Liberation Sans', sans-serif;color:#000;letter-spacing:-0.384px;">Translator  (Type 44) EN2683B BA</span>
<span class="t" style="left:898px;top:779px;font-size:12px;font-weight:400;font-family:'Liberation Sans', sans-serif;color:#000;letter-spacing:-0.29px;">Translator  (Type 45) SM2234H AC</span>
<div style="left:866px;top:797px;width:334px;height:22px;background:#91c9f7;"></div>
<span class="t" style="left:898px;top:801px;font-size:12px;font-weight:400;font-family:'Liberation Sans', sans-serif;color:#000;letter-spacing:-0.327px;">Translator  (Type 46) SM2236</span>
<span class="t" style="left:898px;top:823px;font-size:12px;font-weight:400;font-family:'Liberation Sans', sans-serif;color:#000;letter-spacing:-0.355px;">Translator  (Type 47) SM2258EN</span>
<svg style="left:1013px;top:818px" width="150" height="28" viewBox="0 0 150 28"><g fill="none" stroke="#454545" stroke-opacity="0.9" stroke-width="2.1" stroke-linecap="butt" stroke-linejoin="miter"><g transform="translate(2.6 2.0) scale(0.94 0.96)"><path d="M12.5 0.5 L10 3.5 M6.5 4 L17.5 4 M6.5 4 L6.5 11 Q6.3 13.5 4 15 M17.5 4 L17.5 12.5 Q17.5 14 15.5 13.5 M1.5 9 L22.5 9 M11.5 5.5 L12.5 7.5 M11.5 10.5 L12.5 12.5 M4 15.5 L20 15.5 M4 15.5 L4 22.5 M9.3 15.5 L9.3 22.5 M14.7 15.5 L14.7 22.5 M20 15.5 L20 22.5 M0.5 22.5 L23.5 22.5"/></g><g transform="translate(26.6 2.0) scale(0.94 0.96)"><path d="M7 0.5 L9.5 4 M17 0.5 L14.5 4 M1.5 5 L22.5 5 M12.5 5 L11 8.5 M5.5 8.5 L18.5 8.5 M5.5 8.5 L5.5 23.5 M18.5 8.5 L18.5 23.5 M5.5 13.3 L18.5 13.3 M5.5 18 L18.5 18 M5.5 22.8 L18.5 22.8"/></g><g transform="translate(50.6 2.0) scale(0.94 0.96)"><path d="M6.5 0.5 L6.5 11 M0.5 6 L12.5 6 M1.5 1.5 L3.5 4 M11.5 1.5 L9.5 4 M6.5 6 L1 11 M6.5 6 L12 10.5 M5.5 11.5 L3 17.5 L10.5 22 M10 12 L7.5 18.5 Q5.5 21.5 1 23.5 M0 15.5 L12.5 15.5 M16.5 0.5 Q15.5 5.5 12.5 9.5 M15 6 L23.8 6 M21 6 Q20 14 11.5 23.5 M15 9.5 Q18 18 24 23"/></g><g transform="translate(74.6 2.0) scale(0.94 0.96)"><path d="M0.3 6.5 L8.5 6.5 M4.5 0.5 L4.5 21 Q4.5 23.5 1.5 22 M0.3 15.5 L8.5 12 M10.5 2 L22.5 2 M22.5 2 L22.5 8 M10.5 8 L22.5 8 M10.5 2 L10.5 13 Q10.5 19 8 23.5 M11.5 12.5 L24 12.5 M17.5 8.5 L17.5 16.8 M12.5 16.8 L22.5 16.8 L22.5 23 L12.5 23 Z"/></g><g transform="translate(98.6 2.0) scale(0.94 0.96)"><path d="M4.5 0.5 L4.5 23.5 M1.5 6 L0.3 11.5 M6.5 4.5 L8.5 8 M8.5 5.5 L24 5.5 M14.5 0.5 Q13.5 14 7.5 23.5 M13.5 11 L12.3 15.5 M22.5 10 L20.3 14.5 M17.5 8 L17.5 13 Q16.5 19.5 10.5 23.5 M17.5 14 Q19 19.5 24 23"/></g><g transform="translate(122.6 2.0) scale(0.94 0.96)"><path d="M7 0.5 Q5 4.5 1.5 7 M5.5 3 L22.5 3 M6.5 6.8 L18.5 6.8 L18.5 14 L6.5 14 Z M6.5 10.4 L18.5 10.4 M9.5 14.5 Q7.5 18 3 20.5 M8 16.8 L18.5 16.8 Q13.5 21.5 2.5 23.8 M8.5 18.5 Q14.5 22 23.5 23.8"/></g></g><g fill="none" stroke="#7e7e7e" stroke-opacity="1" stroke-width="2.2" stroke-linecap="butt" stroke-linejoin="miter"><g transform="translate(1.6 1) scale(0.94 0.96)"><path d="M12.5 0.5 L10 3.5 M6.5 4 L17.5 4 M6.5 4 L6.5 11 Q6.3 13.5 4 15 M17.5 4 L17.5 12.5 Q17.5 14 15.5 13.5 M1.5 9 L22.5 9 M11.5 5.5 L12.5 7.5 M11.5 10.5 L12.5 12.5 M4 15.5 L20 15.5 M4 15.5 L4 22.5 M9.3 15.5 L9.3 22.5 M14.7 15.5 L14.7 22.5 M20 15.5 L20 22.5 M0.5 22.5 L23.5 22.5"/></g><g transform="translate(25.6 1) scale(0.94 0.96)"><path d="M7 0.5 L9.5 4 M17 0.5 L14.5 4 M1.5 5 L22.5 5 M12.5 5 L11 8.5 M5.5 8.5 L18.5 8.5 M5.5 8.5 L5.5 23.5 M18.5 8.5 L18.5 23.5 M5.5 13.3 L18.5 13.3 M5.5 18 L18.5 18 M5.5 22.8 L18.5 22.8"/></g><g transform="translate(49.6 1) scale(0.94 0.96)"><path d="M6.5 0.5 L6.5 11 M0.5 6 L12.5 6 M1.5 1.5 L3.5 4 M11.5 1.5 L9.5 4 M6.5 6 L1 11 M6.5 6 L12 10.5 M5.5 11.5 L3 17.5 L10.5 22 M10 12 L7.5 18.5 Q5.5 21.5 1 23.5 M0 15.5 L12.5 15.5 M16.5 0.5 Q15.5 5.5 12.5 9.5 M15 6 L23.8 6 M21 6 Q20 14 11.5 23.5 M15 9.5 Q18 18 24 23"/></g><g transform="translate(73.6 1) scale(0.94 0.96)"><path d="M0.3 6.5 L8.5 6.5 M4.5 0.5 L4.5 21 Q4.5 23.5 1.5 22 M0.3 15.5 L8.5 12 M10.5 2 L22.5 2 M22.5 2 L22.5 8 M10.5 8 L22.5 8 M10.5 2 L10.5 13 Q10.5 19 8 23.5 M11.5 12.5 L24 12.5 M17.5 8.5 L17.5 16.8 M12.5 16.8 L22.5 16.8 L22.5 23 L12.5 23 Z"/></g><g transform="translate(97.6 1) scale(0.94 0.96)"><path d="M4.5 0.5 L4.5 23.5 M1.5 6 L0.3 11.5 M6.5 4.5 L8.5 8 M8.5 5.5 L24 5.5 M14.5 0.5 Q13.5 14 7.5 23.5 M13.5 11 L12.3 15.5 M22.5 10 L20.3 14.5 M17.5 8 L17.5 13 Q16.5 19.5 10.5 23.5 M17.5 14 Q19 19.5 24 23"/></g><g transform="translate(121.6 1) scale(0.94 0.96)"><path d="M7 0.5 Q5 4.5 1.5 7 M5.5 3 L22.5 3 M6.5 6.8 L18.5 6.8 L18.5 14 L6.5 14 Z M6.5 10.4 L18.5 10.4 M9.5 14.5 Q7.5 18 3 20.5 M8 16.8 L18.5 16.8 Q13.5 21.5 2.5 23.8 M8.5 18.5 Q14.5 22 23.5 23.8"/></g></g></svg>
<span class="t" style="left:1021.5px;top:846.0px;font-size:20.8px;font-weight:400;font-family:'Liberation Sans', sans-serif;color:#2e2e2e;letter-spacing:-0.094px;line-height:24px">18913587620</span>
<span class="t" style="left:1020.4px;top:845.0px;font-size:20.8px;font-weight:400;font-family:'Liberation Sans', sans-serif;color:#cf4cf7;letter-spacing:-0.094px;line-height:24px">18913587620</span>
</div></body></html>
